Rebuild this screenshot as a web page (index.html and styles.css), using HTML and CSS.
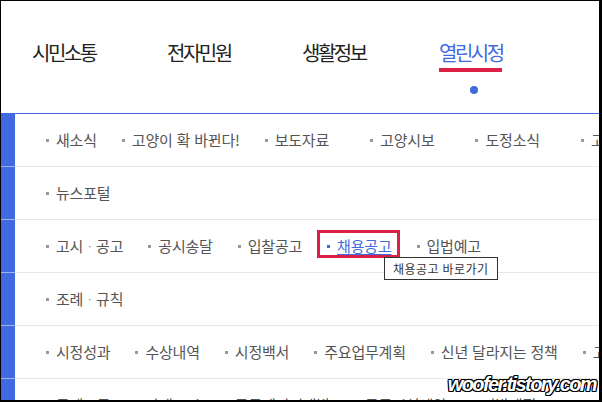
FILE: index.html
```html
<!DOCTYPE html>
<html lang="ko">
<head>
    <meta charset="UTF-8">
    <meta name="viewport" content="width=device-width, initial-scale=1.0">
    <title>열린시정</title>
    <link rel="stylesheet" href="styles.css">
</head>
<body>
    <div class="frame">
        <div class="gnb">
            <a class="gnb-item">시민소통</a>
            <a class="gnb-item">전자민원</a>
            <a class="gnb-item gnb-item--wide">생활정보</a>
            <a class="gnb-item gnb-item--active">
                <span>열린시정</span>
                <span class="gnb-bar"></span>
                <span class="gnb-dot"></span>
            </a>
        </div>

        <div class="sub-menu">
            <div class="sub-row">
                <div class="sub-side"></div>
                <ul class="sub-list">
                    <li class="sub-item">새소식</li>
                    <li class="sub-item">고양이 확 바뀐다!</li>
                    <li class="sub-item sub-item--wide">보도자료</li>
                    <li class="sub-item sub-item--wide">고양시보</li>
                    <li class="sub-item sub-item--wide">도정소식</li>
                    <li class="sub-item">고양소식지</li>
                </ul>
            </div>
            <div class="sub-row">
                <div class="sub-side"></div>
                <ul class="sub-list">
                    <li class="sub-item">뉴스포털</li>
                </ul>
            </div>
            <div class="sub-row">
                <div class="sub-side"></div>
                <ul class="sub-list">
                    <li class="sub-item">고시 <span class="mid">·</span> 공고</li>
                    <li class="sub-item">공시송달</li>
                    <li class="sub-item">입찰공고</li>
                    <li class="sub-item sub-item--focus">
                        <a class="sub-link">채용공고</a>
                        <span class="tooltip">채용공고 바로가기</span>
                    </li>
                    <li class="sub-item">입법예고</li>
                </ul>
            </div>
            <div class="sub-row">
                <div class="sub-side"></div>
                <ul class="sub-list">
                    <li class="sub-item">조례 <span class="mid">·</span> 규칙</li>
                </ul>
            </div>
            <div class="sub-row">
                <div class="sub-side"></div>
                <ul class="sub-list">
                    <li class="sub-item">시정성과</li>
                    <li class="sub-item">수상내역</li>
                    <li class="sub-item">시정백서</li>
                    <li class="sub-item">주요업무계획</li>
                    <li class="sub-item">신년 달라지는 정책</li>
                    <li class="sub-item">고양시 통계</li>
                </ul>
            </div>
            <div class="sub-row">
                <div class="sub-side"></div>
                <ul class="sub-list">
                    <li class="sub-item">국제교류</li>
                    <li class="sub-item">자매도시</li>
                    <li class="sub-item">공공데이터개방</li>
                    <li class="sub-item">공공시설예약</li>
                    <li class="sub-item">지방재정</li>
                </ul>
            </div>
        </div>

        <div class="watermark">woofer.tistory.com</div>
    </div>
</body>
</html>
```

FILE: styles.css
```css
body {
    margin: 0;
    font-family: "Noto Sans CJK KR", "Noto Sans", sans-serif;
    background: #fff;
}
.frame {
    position: relative;
    width: 602px;
    height: 402px;
    box-sizing: border-box;
    border: 1px solid #000;
    border-right-width: 3px;
    border-bottom-width: 2px;
    overflow: hidden;
    background: #fff;
}

/* top menu */
.gnb {
    display: flex;
    align-items: flex-start;
    height: 112px;
    box-sizing: border-box;
    padding: 39px 0 0 31px;
}
.gnb-item {
    width: 135px;
    font-size: 20px;
    line-height: 26px;
    letter-spacing: -2.5px;
    color: #222;
    text-decoration: none;
}
.gnb-item--wide {
    width: 137px;
}
.gnb-item--active {
    display: flex;
    flex-direction: column;
    width: auto;
    color: #3f6ae0;
}
.gnb-bar {
    height: 4px;
    margin-top: 2px;
    margin-right: 1px;
    background: #dc1f45;
}
.gnb-dot {
    align-self: center;
    width: 8px;
    height: 8px;
    margin: 14px 0 0 6px;
    border-radius: 50%;
    background: #3f6ae0;
}

/* sub menu rows */
.sub-menu {
    border-top: 1px solid #4169e1;
}
.sub-row {
    display: flex;
    height: 53px;
    box-sizing: border-box;
    border-bottom: 1px solid #e8e8e8;
}
.sub-side {
    width: 14px;
    flex-shrink: 0;
    margin-bottom: -1px;
    border-bottom: 1px solid #9fb2ee;
    background: #4169e1;
}
.sub-list {
    display: flex;
    align-items: center;
    margin: 0;
    padding: 0 0 0 31px;
    list-style: none;
    white-space: nowrap;
}
.sub-item {
    position: relative;
    display: flex;
    align-items: center;
    margin-right: 25px;
    font-size: 15px;
    line-height: 20px;
    letter-spacing: -0.2px;
    color: #555;
}
.sub-item::before {
    content: "";
    width: 3px;
    height: 3px;
    margin-right: 7px;
    background: #999;
}
.sub-item--wide {
    margin-right: 41px;
}
.mid {
    margin: 0 5px;
    font-size: 11px;
    color: #888;
}
.sub-item--focus::before {
    background: #3f6ae0;
}
.sub-item--focus::after {
    content: "";
    position: absolute;
    left: -10px;
    right: -8px;
    top: -6px;
    bottom: -2px;
    border: 3px solid #dc1f45;
}
.sub-link {
    color: #3f6ae0;
    text-decoration: underline;
    text-underline-offset: 2px;
}
.tooltip {
    position: absolute;
    left: 57px;
    top: 21px;
    z-index: 2;
    padding: 0 9px 0 8px;
    border: 1px solid #333;
    background: #fff;
    font-size: 12px;
    line-height: 21px;
    letter-spacing: 0.4px;
    color: #333;
}

.watermark {
    position: absolute;
    right: 3px;
    bottom: 4px;
    font-family: "Liberation Sans", sans-serif;
    font-size: 20px;
    font-weight: bold;
    font-style: italic;
    letter-spacing: -1.6px;
    color: #fff;
    text-shadow: 1px 0 0 #000, -1px 0 0 #000, 0 1px 0 #000, 0 -1px 0 #000,
        1px 1px 0 #000, -1px -1px 0 #000, 1px -1px 0 #000, -1px 1px 0 #000;
}
```
